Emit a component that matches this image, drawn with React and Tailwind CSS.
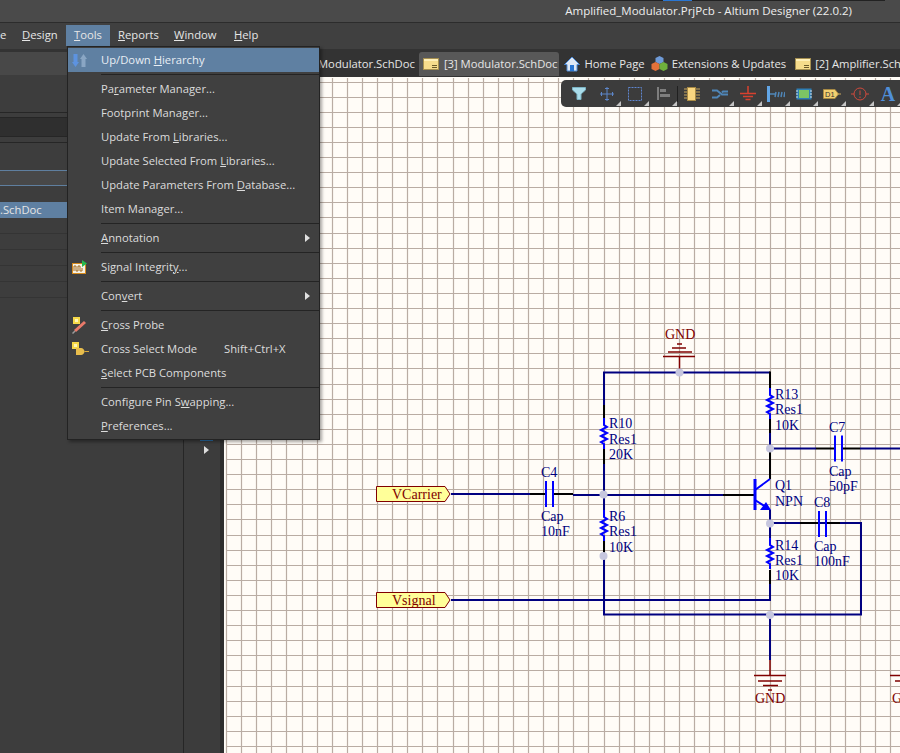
const gridX = Array.from({ length: 46 }, (_, i) => Math.round(226 + 15.1 * i) + 0.5);
const gridY = Array.from({ length: 46 }, (_, i) => Math.round(81.5 + 15.1 * i) + 0.5);

const WIRE = "#000080";
const PIN = "#0000ff";
const RED = "#800000";

const Wire = ({ d, color = WIRE }) => <path d={d} fill="none" stroke={color} strokeWidth="2" />;

const Junction = ({ x, y }) => <circle cx={x} cy={y} r="4" fill="#c6c6de" />;

const Label = ({ x, y, children, color = WIRE }) => (
  <text x={x} y={y} fill={color} fontSize="14">
    {children}
  </text>
);

// vertical resistor, y is where the zigzag starts
const Resistor = ({ x, y }) => (
  <path
    d={`M${x} ${y - 7}V${y}l3 2-6 3 6 3-6 3 6 3-6 3 3 2v5`}
    fill="none"
    stroke={PIN}
    strokeWidth="2"
  />
);

const Cap = ({ x, y, h = 13 }) => (
  <path d={`M${x} ${y - h}v${h * 2}M${x + 7} ${y - h}v${h * 2}`} stroke={PIN} strokeWidth="2" fill="none" />
);

const Port = ({ y, label, tx }) => (
  <g>
    <path d={`M376.5 ${y - 7.5}H445l5 7.5-5 7.5H376.5z`} fill="#ffff99" stroke={RED} strokeWidth="1" />
    <text x={tx} y={y + 5} fill={RED} fontSize="14">
      {label}
    </text>
  </g>
);

const Schematic = () => (
  <svg viewBox="224 77 676 676" className="block w-full h-full font-['Liberation_Serif',serif]">
    <rect x="224" y="77" width="676" height="676" fill="#fffcf7" />
    <g stroke="#b9aca3" strokeWidth="1.2">
      {gridX.map((x) => (
        <line key={x} x1={x} x2={x} y1="78" y2="753" />
      ))}
      {gridY.map((y) => (
        <line key={y} x1="226" x2="900" y1={y} y2={y} />
      ))}
    </g>

    {/* nets */}
    <Wire d="M451 494H530" />
    <Wire d="M530 494H546M553 494H573" color="#000" />
    <Wire d="M573 495H723" />
    <Wire d="M723 495H755" color="#000" />
    <Wire d="M770 372.5H604V405" />
    <Wire d="M604 405V418M604 449V464" color="#000" />
    <Wire d="M604 464V510" />
    <Wire d="M604 540V556" color="#000" />
    <Wire d="M604 556V614.5H861V523H770" />
    <Wire d="M451 600H770V584" />
    <Wire d="M770 371.5V388M770 419V433M770 450V479" color="#000" />
    <Wire d="M770 433V448.5H816" />
    <Wire d="M816 448.5H835M841 448.5H860" color="#000" />
    <Wire d="M860 448.5H900" />
    <Wire d="M800 523H819M825 523H840" color="#000" />
    <Wire d="M770 510V540" />
    <Wire d="M770 570V584" color="#000" />
    <Wire d="M770 614.5V660" />

    {/* parts */}
    <Resistor x={604} y={425} />
    <Resistor x={604} y={517} />
    <Resistor x={770} y={395} />
    <Resistor x={770} y={545} />
    <Cap x={546} y={494} />
    <Cap x={835} y={448.5} />
    <Cap x={819} y={524} />
    <path d="M755 479V510" stroke={PIN} strokeWidth="3" />
    <path d="M755 490L770 479M755 500L766 507" stroke={PIN} strokeWidth="2" fill="none" />
    <path d="M771 510H760L766 502z" fill={PIN} />

    {/* power */}
    <path d="M679.5 372V357M663 356.5H695M668 352H692M672 348H686M677 344H682" stroke={RED} strokeWidth="1.5" fill="none" />
    <path d="M770 660V675M754 675.5H786M758 681H782M763 685.5H778M768 690H772" stroke={RED} strokeWidth="1.5" fill="none" />
    <path d="M890 675.5H900M895 681H900" stroke={RED} strokeWidth="1.5" fill="none" />

    <Junction x={603.5} y={494.5} />
    <Junction x={603.5} y={556} />
    <Junction x={679.5} y={372.5} />
    <Junction x={770} y={448.5} />
    <Junction x={770} y={523.5} />
    <Junction x={770} y={615} />

    <Port y={494} label="VCarrier" tx={392} />
    <Port y={600} label="Vsignal" tx={392} />

    <Label x={609} y={428}>R10</Label>
    <Label x={609} y={444}>Res1</Label>
    <Label x={609} y={459}>20K</Label>
    <Label x={541} y={477}>C4</Label>
    <Label x={541} y={521}>Cap</Label>
    <Label x={541} y={536}>10nF</Label>
    <Label x={609} y={521}>R6</Label>
    <Label x={609} y={536}>Res1</Label>
    <Label x={609} y={552}>10K</Label>
    <Label x={775} y={399}>R13</Label>
    <Label x={775} y={414}>Res1</Label>
    <Label x={775} y={430}>10K</Label>
    <Label x={829} y={432}>C7</Label>
    <Label x={829} y={476}>Cap</Label>
    <Label x={829} y={491}>50pF</Label>
    <Label x={775} y={490}>Q1</Label>
    <Label x={775} y={506}>NPN</Label>
    <Label x={814} y={507}>C8</Label>
    <Label x={814} y={551}>Cap</Label>
    <Label x={814} y={566}>100nF</Label>
    <Label x={775} y={550}>R14</Label>
    <Label x={775} y={565}>Res1</Label>
    <Label x={775} y={580}>10K</Label>
    <Label x={665} y={339} color={RED}>GND</Label>
    <Label x={755} y={703} color={RED}>GND</Label>
    <Label x={892} y={703} color={RED}>GND</Label>
  </svg>
);

const DocIcon = () => (
  <svg width="16" height="12" viewBox="0 0 16 12" className="shrink-0">
    <rect x="0.5" y="0.5" width="15" height="11" fill="#f6dc8c" stroke="#a58f50" />
    <rect x="1" y="1" width="14" height="2" fill="#fff0b8" />
    <path d="M9 7.5h5M9 9.5h5" stroke="#6b5a2a" />
  </svg>
);

const HomeIcon = () => (
  <svg width="16" height="16" viewBox="0 0 16 16" className="shrink-0">
    <path d="M8 1L0.5 8.5H3V15H13V8.5H15.5z" fill="#dfe9f5" stroke="#4d8ad6" />
    <rect x="6" y="9" width="4" height="6" fill="#2a76d2" />
  </svg>
);

const ExtIcon = () => (
  <svg width="17" height="16" viewBox="0 0 17 16" className="shrink-0">
    <path d="M8.5 0l4 2v4l-4 2-4-2V2z" fill="#6f9bd8" />
    <path d="M4.5 6l4 2v5l-4 2-4-2V8z" fill="#e3713a" />
    <path d="M12.5 6l4 2v5l-4 2-4-2V8z" fill="#6fb03c" />
  </svg>
);

const Tab = ({ icon, active, children }) => (
  <div
    className={
      active
        ? "flex items-center gap-[5px] h-[24px] mt-[3px] pl-[4px] pr-[2px] rounded-t-[3px] bg-[#585858] text-[#e6e6e6] whitespace-nowrap"
        : "flex items-center gap-[4px] h-[24px] mt-[3px] text-[#e6e6e6] whitespace-nowrap"
    }
  >
    {icon}
    <span>{children}</span>
  </div>
);

const ToolBtn = ({ children, corner = true }) => (
  <div className="relative w-[28px] h-[27px] flex items-center justify-center shrink-0">
    {children}
    {corner && (
      <svg width="5" height="5" viewBox="0 0 5 5" className="absolute right-0 bottom-[1px]">
        <path d="M5 0V5H0z" fill="#c4c4c4" />
      </svg>
    )}
  </div>
);

const Toolbar = () => (
  <div className="absolute left-[377px] top-[3px] right-0 h-[27px] flex pl-[4px] bg-[#3c3c3c] rounded-l-[5px]">
    <ToolBtn corner={false}>
      <svg width="14" height="13" viewBox="0 0 14 13">
        <path d="M0.5 0.5H13.5V3L9 7V12.5H5V7L0.5 3z" fill="#a9dcea" stroke="#7cb4c4" />
      </svg>
    </ToolBtn>
    <ToolBtn>
      <svg width="14" height="14" viewBox="0 0 14 14">
        <path d="M7 0V14M0 7H14M5 1.5H9M5 12.5H9M1.5 5V9M12.5 5V9" stroke="#5d86c9" fill="none" />
      </svg>
    </ToolBtn>
    <ToolBtn>
      <svg width="14" height="14" viewBox="0 0 14 14">
        <rect x="0.5" y="0.5" width="13" height="13" fill="none" stroke="#5f86d0" strokeDasharray="2 1" />
      </svg>
    </ToolBtn>
    <ToolBtn>
      <svg width="13" height="13" viewBox="0 0 13 13">
        <path d="M1 0V13" stroke="#7e7e7e" strokeWidth="2" />
        <rect x="3" y="2" width="6" height="3" fill="#7e7e7e" />
        <rect x="3" y="7" width="10" height="3" fill="#7e7e7e" />
      </svg>
    </ToolBtn>
    <div className="w-[1px] h-[16px] mt-[6px] bg-[#202020] shrink-0" />
    <ToolBtn corner={false}>
      <svg width="16" height="16" viewBox="0 0 16 16">
        <path d="M0 3H16M0 6H16M0 9H16M0 12H16" stroke="#c9a75d" />
        <rect x="3.5" y="1.5" width="8" height="13" fill="#f9d680" stroke="#a88a44" />
      </svg>
    </ToolBtn>
    <ToolBtn>
      <svg width="16" height="10" viewBox="0 0 16 10">
        <path d="M0 1.5H5L10 5.5H16M0 8.5H5L8 6M10 3.5L11 2.5H16" stroke="#4f86b8" strokeWidth="2" fill="none" />
      </svg>
    </ToolBtn>
    <ToolBtn>
      <svg width="16" height="15" viewBox="0 0 16 15">
        <path d="M8 0V7M0 7.5H16M3 10.5H13M5.5 13.5H10.5" stroke="#d8412f" strokeWidth="1.5" fill="none" />
      </svg>
    </ToolBtn>
    <ToolBtn>
      <svg width="18" height="16" viewBox="0 0 18 16">
        <rect x="0" y="0" width="3" height="16" fill="#62a6e6" />
        <path d="M3 8H8M8 11l1-5M11 11l1-5M14 11l1-5M17 11l1-5" stroke="#4f86b8" fill="none" strokeWidth="1.5" />
      </svg>
    </ToolBtn>
    <ToolBtn>
      <svg width="16" height="12" viewBox="0 0 16 12">
        <rect x="0.5" y="0.5" width="15" height="11" fill="#2e7fb5" />
        <rect x="3" y="2" width="10" height="8" fill="#7cc464" />
        <path d="M0 3h2M0 6h2M0 9h2M14 3h2M14 6h2M14 9h2" stroke="#d7e4ec" />
      </svg>
    </ToolBtn>
    <ToolBtn>
      <svg width="18" height="10" viewBox="0 0 18 10">
        <path d="M0.5 0.5H12L15.5 5 12 9.5H0.5z" fill="#f3cf70" stroke="#a88a44" />
        <path d="M15 5H18" stroke="#c9a75d" />
        <text x="2" y="8" fontSize="7.5" fill="#333" fontFamily="'Liberation Sans',sans-serif">D1</text>
      </svg>
    </ToolBtn>
    <ToolBtn>
      <svg width="18" height="14" viewBox="0 0 18 14">
        <circle cx="9" cy="7" r="6" fill="none" stroke="#cf4a3c" />
        <path d="M0 7H3M15 7H18M9 3.5V8M9 9.5V11" stroke="#cf4a3c" fill="none" />
      </svg>
    </ToolBtn>
    <ToolBtn>
      <span className="font-['Liberation_Serif',serif] font-bold text-[20px] text-[#4f8fd8] leading-none">A</span>
    </ToolBtn>
  </div>
);

const UpDownIcon = () => (
  <svg width="15" height="13" viewBox="0 0 15 13">
    <path d="M1.5 0H5.5V8H7L3.5 13 0 8H1.5z" fill="#5d93e0" />
    <path d="M9.5 13V5H8L11.5 0 15 5H13.5V13z" fill="#8aa6c4" />
  </svg>
);

const SignalIcon = () => (
  <svg width="15" height="15" viewBox="0 0 15 15">
    <rect x="0.5" y="3.5" width="13" height="10" fill="#f5f1e4" stroke="#d68a1c" />
    <path d="M2 11V6H4V11H6V6H8V11H10V8" fill="none" stroke="#a26a20" />
    <path d="M10 0L15 3.5 10 7z" fill="#25b84c" />
  </svg>
);

const ProbeIcon = () => (
  <svg width="15" height="17" viewBox="0 0 15 17">
    <rect x="1" y="0" width="7" height="7" fill="#f6d948" />
    <rect x="3" y="2" width="3" height="3" fill="#fff6b8" />
    <path d="M13 5L3 14" stroke="#ea7a6a" strokeWidth="3" />
    <path d="M3 14L0.5 16.5" stroke="#9a9a9a" strokeWidth="1.5" />
  </svg>
);

const SelectIcon = () => (
  <svg width="17" height="14" viewBox="0 0 17 14">
    <rect x="0" y="0" width="7" height="7" fill="#f6d948" />
    <rect x="2" y="2" width="3" height="3" fill="#fff6b8" />
    <path d="M4 6H9C11 6 12.5 8 12.5 9.5S11 13 9 13H4z" fill="#e8bd4c" />
    <path d="M12.5 9.5H17" stroke="#d8a93c" />
  </svg>
);

const Item = ({ icon, shortcut, sub, children }) => (
  <div className="flex items-center h-[24px]">
    <span className="w-[33px] pl-[4px] flex items-center shrink-0">{icon}</span>
    <span className={shortcut ? "w-[123px] whitespace-nowrap" : "whitespace-nowrap"}>{children}</span>
    {shortcut && <span className="whitespace-nowrap">{shortcut}</span>}
    {sub && (
      <svg width="5" height="8" viewBox="0 0 5 8" className="ml-auto mr-[9px]">
        <path d="M0 0L5 4 0 8z" fill="#e0e0e0" />
      </svg>
    )}
  </div>
);

const Sep = () => (
  <div className="h-[5px] ml-[33px] flex items-center">
    <div className="h-[1px] w-full bg-[#242424]" />
  </div>
);

const ToolsMenu = () => (
  <div className="absolute left-[67px] top-[46px] w-[253px] h-[394px] border border-[#232323] bg-[#404040] text-[#dcdcdc] py-[1px] shadow-[2px_2px_3px_rgba(0,0,0,0.35)]">
    <div className="bg-[#5f80a2] text-[#e8eef4]">
      <Item icon={<UpDownIcon />}>Up/Down <u>H</u>ierarchy</Item>
    </div>
    <Sep />
    <Item>Pa<u>r</u>ameter Manager...</Item>
    <Item>Footprint Mana<u>g</u>er...</Item>
    <Item>Update From <u>L</u>ibraries...</Item>
    <Item>Update Selected From <u>L</u>ibraries...</Item>
    <Item>Update Parameters From <u>D</u>atabase...</Item>
    <Item>Item Manager...</Item>
    <Sep />
    <Item sub><u>A</u>nnotation</Item>
    <Sep />
    <Item icon={<SignalIcon />}>Signal Integrit<u>y</u>...</Item>
    <Sep />
    <Item sub>Con<u>v</u>ert</Item>
    <Sep />
    <Item icon={<ProbeIcon />}><u>C</u>ross Probe</Item>
    <Item icon={<SelectIcon />} shortcut="Shift+Ctrl+X">Cross Select Mode</Item>
    <Item><u>S</u>elect PCB Components</Item>
    <Sep />
    <Item>Configure Pin S<u>w</u>apping...</Item>
    <Item><u>P</u>references...</Item>
  </div>
);

const LeftPanel = () => (
  <div className="w-[184px] shrink-0 flex flex-col bg-[#3d3d3d] border-r border-[#262626] overflow-hidden text-[#e6e6e6]">
    <div className="h-[3px] shrink-0 bg-[#333333]" />
    <div className="h-[23px] shrink-0 bg-[#484848]" />
    <div className="h-[38px] shrink-0 border-b border-[#262626]" />
    <div className="h-[5px] shrink-0 border-b border-[#262626]" />
    <div className="h-[19px] shrink-0 bg-[#2f2f2f] border-b border-[#262626]" />
    <div className="h-[6px] shrink-0 border-b border-[#262626]" />
    <div className="h-[27px] shrink-0" />
    <div className="h-[16px] shrink-0 bg-[#484848] border-y border-[#5f7f9f]" />
    <div className="h-[16px] shrink-0" />
    <div className="h-[16px] shrink-0 bg-[#5f80a2] flex items-center whitespace-nowrap">.SchDoc</div>
    {[0, 1, 2, 3, 4].map((i) => (
      <div key={i} className="h-[16px] shrink-0 border-b border-[#343434]" />
    ))}
  </div>
);

const App = () => {
  return (
    <div className="relative w-[900px] h-[753px] overflow-hidden flex flex-col bg-[#3d3d3d] font-['Open_Sans',sans-serif] text-[11.25px]">
      {/* title bar */}
      <div className="relative h-[23px] shrink-0 flex items-center justify-end pr-[48px] bg-[#4a4a4a] border-b border-[#2c2c2c] text-[#eeeeee] text-[11.5px] whitespace-nowrap">
        <div className="absolute left-[600px] right-[15px] top-0 h-[1px] bg-[#222222]" />
        <div className="absolute left-[663px] w-[29px] top-0 h-[1px] bg-[#2a76d2]" />
        Amplified_Modulator.PrjPcb - Altium Designer (22.0.2)
      </div>

      {/* menu bar */}
      <div className="h-[26px] shrink-0 flex items-start pt-[2px] bg-[#404040] text-[#e6e6e6]">
        <span className="w-[22px] h-[21px] flex items-center">e</span>
        <span className="w-[44px] h-[21px] flex items-center"><u>D</u>esign</span>
        <span className="w-[44px] h-[21px] flex items-center justify-center bg-[#5f80a2]"><u>T</u>ools</span>
        <span className="ml-[8px] w-[56px] h-[21px] flex items-center"><u>R</u>eports</span>
        <span className="w-[60px] h-[21px] flex items-center"><u>W</u>indow</span>
        <span className="h-[21px] flex items-center"><u>H</u>elp</span>
      </div>

      {/* body */}
      <div className="flex-1 flex min-h-0">
        <LeftPanel />
        <div className="flex-1 min-w-0 flex flex-col">
          <div className="h-[28px] shrink-0 flex pl-[134px] bg-[#333333] overflow-hidden">
            <Tab>Modulator.SchDoc</Tab>
            <div className="w-[4px] shrink-0" />
            <Tab active icon={<DocIcon />}>[3] Modulator.SchDoc</Tab>
            <div className="w-[5px] shrink-0" />
            <Tab icon={<HomeIcon />}>Home Page</Tab>
            <div className="w-[6px] shrink-0" />
            <Tab icon={<ExtIcon />}>Extensions &amp; Updates</Tab>
            <div className="w-[9px] shrink-0" />
            <Tab icon={<DocIcon />}>[2] Amplifier.SchDoc</Tab>
          </div>
          <div className="relative flex-1 flex min-h-0">
            <div className="w-[36px] shrink-0 bg-[#3c3c3c] relative">
              <div className="absolute left-[16px] top-[363px] w-[13px] h-[1px] bg-[#2a6ea8]" />
              <svg width="5" height="8" viewBox="0 0 5 8" className="absolute left-[20px] top-[369px]">
                <path d="M0 0L5 4 0 8z" fill="#dddddd" />
              </svg>
            </div>
            <div className="w-[4px] shrink-0 bg-[#2e2e2e]" />
            <div className="flex-1 min-w-0">
              <Schematic />
            </div>
            <Toolbar />
          </div>
        </div>
      </div>

      <ToolsMenu />
    </div>
  );
};

export default App;
